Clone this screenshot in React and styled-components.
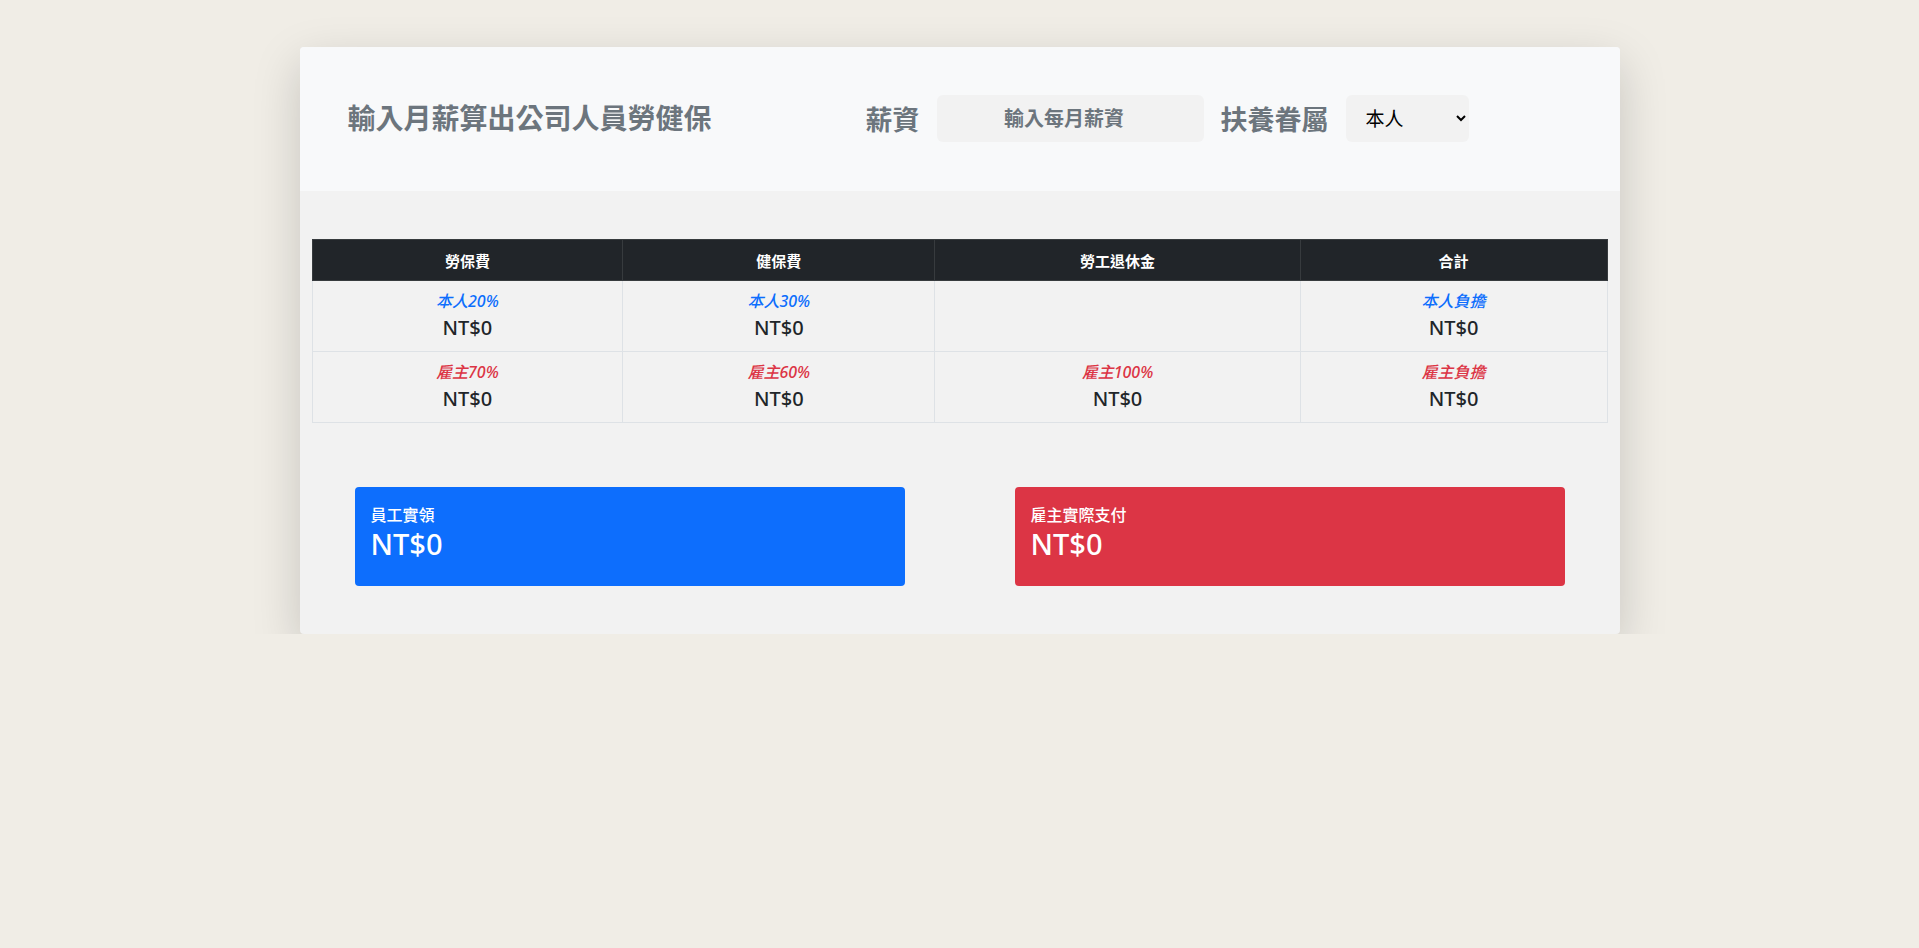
import React, { useState } from "react";
import styled, { createGlobalStyle } from "styled-components";

const GlobalStyle = createGlobalStyle`
    * {
        box-sizing: border-box;
    }

    body {
        margin: 0;
        background: #f0ede6;
        font-family: "Noto Sans", "Noto Sans CJK TC", sans-serif;
        color: #212529;
    }
`;

const Card = styled.div`
    width: 1320px;
    margin: 47px auto 0;
    background: #f2f2f2;
    border-radius: 4px;
    box-shadow: 0 16px 48px rgba(0, 0, 0, 0.175);
    overflow: hidden;
`;

const Header = styled.div`
    display: flex;
    align-items: center;
    padding: 48px 48px 49px;
    background: #f8f9fa;
`;

const Title = styled.h3`
    flex: 0 0 518px;
    margin: 0;
    font-size: 28px;
    font-weight: 600;
    line-height: 1.2;
    color: #6c757d;
`;

const Form = styled.div`
    display: flex;
    align-items: center;
`;

const FieldLabel = styled.label`
    margin-right: 17px;
    font-size: 27px;
    font-weight: 600;
    color: #6c757d;
`;

const SalaryInput = styled.input`
    width: 267px;
    height: 47px;
    margin-right: 17px;
    padding: 0 24px 0 12px;
    border: none;
    border-radius: 6px;
    background: #f2f2f2;
    font-family: inherit;
    font-size: 20px;
    font-weight: 600;
    text-align: center;
    color: #212529;
    outline: none;

    &::placeholder {
        color: #6c757d;
    }
`;

const Select = styled.select`
    width: 123px;
    height: 47px;
    padding: 0 8px 0 16px;
    border: none;
    border-radius: 6px;
    background: #f2f2f2;
    font-family: inherit;
    font-size: 19px;
    color: #000;
    outline: none;
`;

const Body = styled.div`
    padding: 48px 0;
`;

const Table = styled.table`
    width: calc(100% - 24px);
    margin: 0 12px 16px;
    border-collapse: collapse;
    table-layout: fixed;
    text-align: center;
`;

const Th = styled.th`
    width: ${(p) => p.$w};
    height: 41px;
    padding: 8px;
    background: #212529;
    border: 1px solid #373b3e;
    color: #fff;
    font-size: 15px;
    font-weight: 600;
`;

const Td = styled.td`
    height: 71px;
    padding: 8px;
    border: 1px solid #dee2e6;
    vertical-align: top;
`;

const Rate = styled.div`
    font-size: 16px;
    line-height: 24px;
    font-style: italic;
    font-weight: 500;
    color: ${(p) => (p.$tone === "red" ? "#dc3545" : "#0d6efd")};
`;

const Amount = styled.div`
    font-size: 20px;
    line-height: 30px;
    font-weight: 500;
`;

const Summary = styled.div`
    display: flex;
    justify-content: space-around;
    padding-top: 48px;
`;

const SummaryBox = styled.div`
    width: 41.6667%;
    padding: 16px;
    border-radius: 4px;
    background: ${(p) => (p.$tone === "red" ? "#dc3545" : "#0d6efd")};
    color: #fff;
`;

const SummaryLabel = styled.div`
    font-size: 16px;
    line-height: 24px;
    font-weight: 500;
`;

const SummaryValue = styled.h3`
    margin: 0 0 8px;
    font-size: 29px;
    line-height: 1.2;
    font-weight: 500;
`;

const columns = [
    { title: "勞保費", width: "24%", self: "本人20%", boss: "雇主70%" },
    { title: "健保費", width: "24.1%", self: "本人30%", boss: "雇主60%" },
    { title: "勞工退休金", width: "28.2%", self: null, boss: "雇主100%" },
    { title: "合計", width: "23.7%", self: "本人負擔", boss: "雇主負擔" },
];

function App() {
    const [salary, setSalary] = useState("");
    const [family, setFamily] = useState("0");

    return (
        <>
            <GlobalStyle />
            <Card>
                <Header>
                    <Title>輸入月薪算出公司人員勞健保</Title>
                    <Form>
                        <FieldLabel>薪資</FieldLabel>
                        <SalaryInput
                            placeholder="輸入每月薪資"
                            value={salary}
                            onChange={(e) => setSalary(e.target.value)}
                        />
                        <FieldLabel>扶養眷屬</FieldLabel>
                        <Select value={family} onChange={(e) => setFamily(e.target.value)}>
                            <option value="0">本人</option>
                            <option value="1">1人</option>
                            <option value="2">2人</option>
                            <option value="3">3人</option>
                        </Select>
                    </Form>
                </Header>
                <Body>
                    <Table>
                        <thead>
                            <tr>
                                {columns.map((c) => (
                                    <Th key={c.title} $w={c.width}>{c.title}</Th>
                                ))}
                            </tr>
                        </thead>
                        <tbody>
                            <tr>
                                {columns.map((c) => (
                                    <Td key={c.title}>
                                        {c.self && (
                                            <>
                                                <Rate>{c.self}</Rate>
                                                <Amount>NT$0</Amount>
                                            </>
                                        )}
                                    </Td>
                                ))}
                            </tr>
                            <tr>
                                {columns.map((c) => (
                                    <Td key={c.title}>
                                        <Rate $tone="red">{c.boss}</Rate>
                                        <Amount>NT$0</Amount>
                                    </Td>
                                ))}
                            </tr>
                        </tbody>
                    </Table>
                    <Summary>
                        <SummaryBox>
                            <SummaryLabel>員工實領</SummaryLabel>
                            <SummaryValue>NT$0</SummaryValue>
                        </SummaryBox>
                        <SummaryBox $tone="red">
                            <SummaryLabel>雇主實際支付</SummaryLabel>
                            <SummaryValue>NT$0</SummaryValue>
                        </SummaryBox>
                    </Summary>
                </Body>
            </Card>
        </>
    );
}

export default App;
